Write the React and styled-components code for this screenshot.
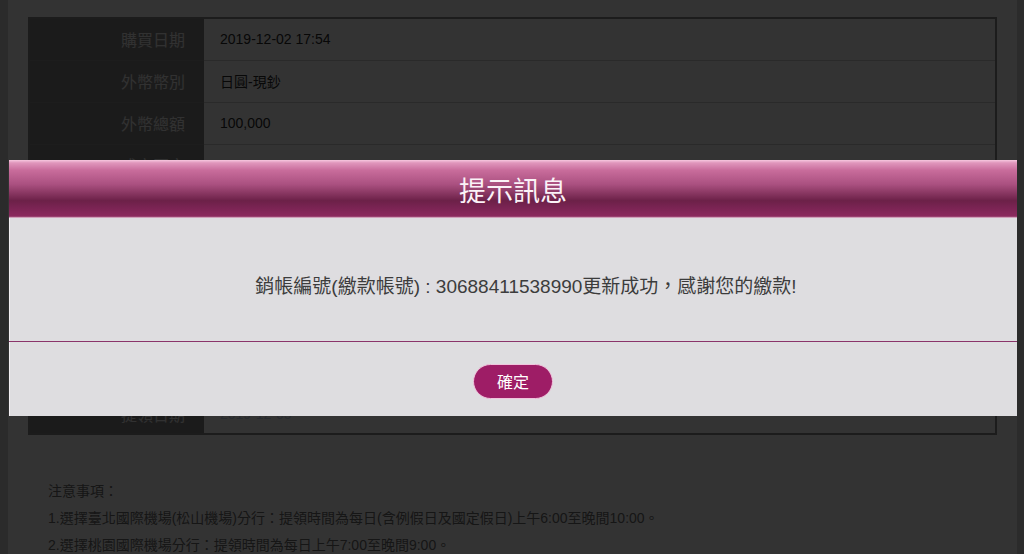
import React from 'react';
import styled, { createGlobalStyle } from 'styled-components';

const GlobalStyle = createGlobalStyle`
  html, body {
    margin: 0;
    padding: 0;
    background: #d6d6d6;
    font-family: "Liberation Sans", "Noto Sans CJK TC", Arial, sans-serif;
    overflow: hidden;
  }
`;

// --- page ---
const Page = styled.div`
  width: 1009px;
  min-height: 554px;
  margin-left: 8px;
  padding: 17px 20px 0;
  box-sizing: border-box;
  background: #ffffff;
`;

const Table = styled.div`
  border: 2px solid #8a8a8a;
  display: grid;
  grid-template-columns: 174px 1fr;
`;

const Label = styled.div`
  height: ${(p) => (p.$last ? 36 : 42)}px;
  border-bottom: ${(p) => (p.$last ? 'none' : '1px solid #8f8f8f')};
  background: #878787;
  color: #f4f4f4;
  font-size: 16px;
  display: flex;
  align-items: center;
  justify-content: flex-end;
  padding-right: 19px;
  padding-bottom: 2px;
  box-sizing: border-box;
`;

const Value = styled.div`
  height: ${(p) => (p.$last ? 36 : 42)}px;
  border-bottom: ${(p) => (p.$last ? 'none' : '1px solid #d2d2d2')};
  color: ${(p) => (p.$link ? '#c8d4f0' : '#2a2a2a')};
  font-size: 14px;
  display: flex;
  align-items: center;
  padding-left: 16px;
  padding-bottom: 2px;
  box-sizing: border-box;
`;

const Notes = styled.div`
  margin-top: 43px;
  padding-left: 20px;
  color: #6e6e6e;
  font-size: 14px;
  line-height: 27px;
`;

// --- modal ---
const Overlay = styled.div`
  position: fixed;
  inset: 0;
  background: rgba(0, 0, 0, 0.8);
`;

const Modal = styled.div`
  position: fixed;
  top: 160px;
  left: 9px;
  width: 1008px;
  background: #dedde0;
  box-shadow: inset 1px 0 0 #f2eef2;
`;

const Header = styled.div`
  height: 58px;
  display: flex;
  align-items: center;
  justify-content: center;
  color: #fbf2f7;
  font-size: 27px;
  background: linear-gradient(
    to bottom,
    #f6c8df 0%,
    #e096bc 5%,
    #c86c9b 18%,
    #aa5080 42%,
    #6c2148 70%,
    #7a2453 82%,
    #8b2a5e 97%,
    #ecd0df 100%
  );
`;

const Message = styled.div`
  height: 124px;
  border-bottom: 1px solid #8a346a;
  display: flex;
  align-items: center;
  justify-content: center;
  padding: 10px 0 0 26px;
  box-sizing: border-box;
  color: #3c3c3c;
  font-size: 19px;
`;

const Footer = styled.div`
  height: 74px;
  display: flex;
  align-items: center;
  justify-content: center;
  padding-top: 4px;
  box-sizing: border-box;
`;

const Button = styled.button`
  width: 80px;
  height: 35px;
  border: 1px solid #f0c4dc;
  border-radius: 18px;
  background: #9e1d66;
  color: #ffffff;
  font-family: "Liberation Sans", "Noto Sans CJK TC", sans-serif;
  font-size: 16px;
  cursor: pointer;
`;

const rows = [
  ['購買日期', '2019-12-02 17:54'],
  ['外幣幣別', '日圓-現鈔'],
  ['外幣總額', '100,000'],
  ['成交匯率', '0.28140'],
  ['台幣金額', '28,140'],
  ['手續費', '0'],
  ['應繳總額', '28,140'],
  ['繳款帳號', '30688411538990'],
  ['提領分行', '松山機場'],
  ['提領日期', '2019-12-05'],
];

function App() {
  return (
    <>
      <GlobalStyle />
      <Page>
        <Table>
          {rows.map(([label, value], i) => {
            const last = i === rows.length - 1;
            return (
              <React.Fragment key={label}>
                <Label $last={last}>{label}</Label>
                <Value $last={last} $link={last}>
                  {value}
                </Value>
              </React.Fragment>
            );
          })}
        </Table>

        <Notes>
          <div>注意事項：</div>
          <div>1.選擇臺北國際機場(松山機場)分行：提領時間為每日(含例假日及國定假日)上午6:00至晚間10:00。</div>
          <div>2.選擇桃園國際機場分行：提領時間為每日上午7:00至晚間9:00。</div>
        </Notes>
      </Page>

      <Overlay />
      <Modal>
        <Header>提示訊息</Header>
        <Message>銷帳編號(繳款帳號) : 30688411538990更新成功，感謝您的繳款!</Message>
        <Footer>
          <Button type="button">確定</Button>
        </Footer>
      </Modal>
    </>
  );
}

export default App;
